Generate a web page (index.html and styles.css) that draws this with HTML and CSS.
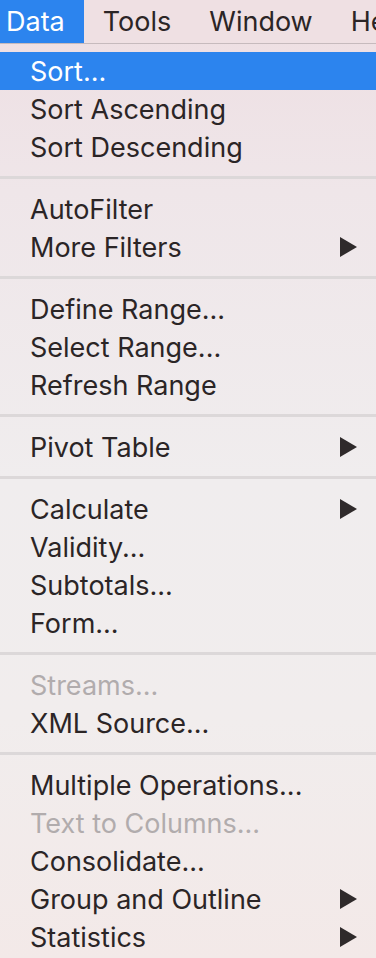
FILE: index.html
```html
<!DOCTYPE html>
<html lang="en">
<head>
    <meta charset="UTF-8">
    <meta name="viewport" content="width=device-width, initial-scale=1.0">
    <title>Data menu</title>
    <link rel="stylesheet" href="styles.css">
</head>
<body>
    <div class="menubar">
        <span class="menubar-item active">Data</span>
        <span class="menubar-item">Tools</span>
        <span class="menubar-item">Window</span>
        <span class="menubar-item">Help</span>
    </div>

    <div class="menu">
        <div class="menu-item selected">Sort...</div>
        <div class="menu-item">Sort Ascending</div>
        <div class="menu-item">Sort Descending</div>
        <div class="separator"></div>
        <div class="menu-item">AutoFilter</div>
        <div class="menu-item">More Filters <svg class="arrow" viewBox="0 0 17 20"><polygon points="0,0 17,10 0,20"/></svg></div>
        <div class="separator"></div>
        <div class="menu-item">Define Range...</div>
        <div class="menu-item">Select Range...</div>
        <div class="menu-item">Refresh Range</div>
        <div class="separator"></div>
        <div class="menu-item">Pivot Table <svg class="arrow" viewBox="0 0 17 20"><polygon points="0,0 17,10 0,20"/></svg></div>
        <div class="separator"></div>
        <div class="menu-item">Calculate <svg class="arrow" viewBox="0 0 17 20"><polygon points="0,0 17,10 0,20"/></svg></div>
        <div class="menu-item">Validity...</div>
        <div class="menu-item">Subtotals...</div>
        <div class="menu-item">Form...</div>
        <div class="separator"></div>
        <div class="menu-item disabled">Streams...</div>
        <div class="menu-item">XML Source...</div>
        <div class="separator"></div>
        <div class="menu-item">Multiple Operations...</div>
        <div class="menu-item disabled">Text to Columns...</div>
        <div class="menu-item">Consolidate...</div>
        <div class="menu-item">Group and Outline <svg class="arrow" viewBox="0 0 17 20"><polygon points="0,0 17,10 0,20"/></svg></div>
        <div class="menu-item">Statistics <svg class="arrow" viewBox="0 0 17 20"><polygon points="0,0 17,10 0,20"/></svg></div>
    </div>
</body>
</html>
```

FILE: styles.css
```css
body {
    margin: 0;
    height: 958px;
    overflow: hidden;
    font-family: 'Inter', 'Liberation Sans', sans-serif;
    color: #2b2526;
    background: linear-gradient(to bottom, #eedee2 0%, #efe6e9 20%, #f0edee 50%, #f1eded 75%, #f3e9e8 100%);
}

/* Top bar */
.menubar {
    display: flex;
    height: 43px;
    border-bottom: 1px solid #c6babd;
    background-color: #efe0e3;
    white-space: nowrap;
    overflow: hidden;
}

.menubar-item {
    padding: 0 19px;
    font-size: 27px;
    line-height: 43px;
}

.menubar-item.active {
    padding-left: 6px;
    background-color: #2c84ee;
    color: white;
}

/* Dropdown */
.menu {
    padding-top: 8px;
}

.menu-item {
    display: flex;
    align-items: center;
    justify-content: space-between;
    height: 38px;
    padding: 0 19px 0 30px;
    font-size: 27px;
}

.menu-item.selected {
    background-color: #2c84ee;
    color: white;
}

.menu-item.disabled {
    color: #b1acad;
}

.arrow {
    width: 17px;
    height: 20px;
    fill: #2f2a2b;
}

.separator {
    height: 3px;
    margin: 10px 0 11px;
    background-color: #dcd8d9;
}
```
